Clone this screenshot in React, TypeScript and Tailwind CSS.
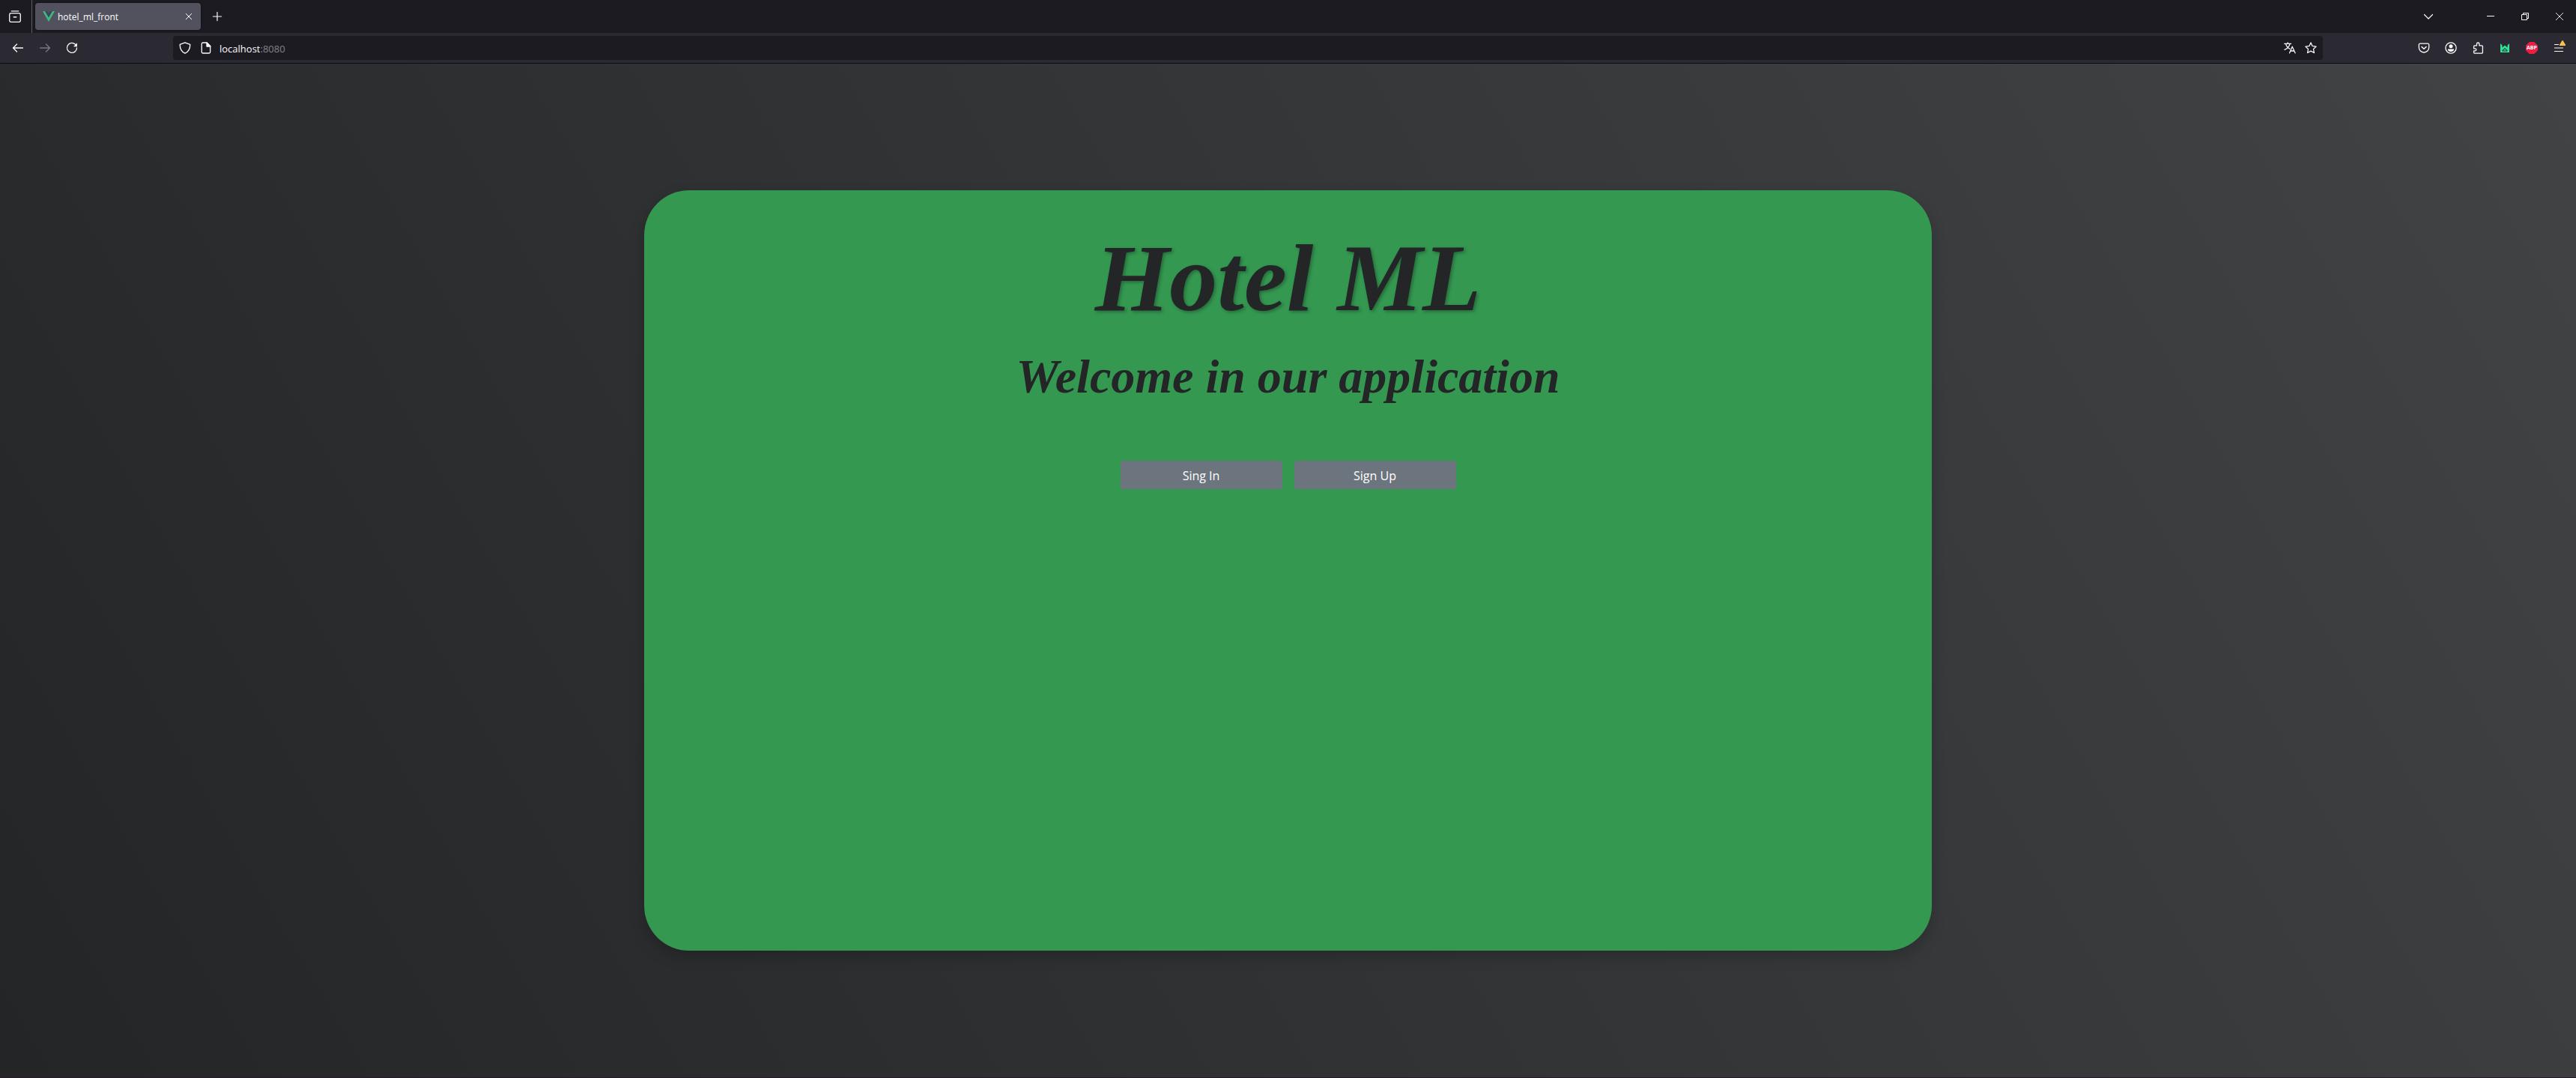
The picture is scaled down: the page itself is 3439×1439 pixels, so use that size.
import type { ReactNode } from "react";

type IconButtonProps = { label: string; className?: string; children: ReactNode };

function IconButton({ label, className = "w-9 h-8", children }: IconButtonProps) {
  return (
    <button type="button" aria-label={label} className={`flex shrink-0 items-center justify-center rounded text-[#fbfbfe] ${className}`}>
      {children}
    </button>
  );
}

function Icon({ children, className = "size-4" }: { children: ReactNode; className?: string }) {
  return (
    <svg viewBox="0 0 16 16" className={className} fill="none" stroke="currentColor" strokeWidth="1.3" strokeLinecap="round" strokeLinejoin="round" aria-hidden="true">
      {children}
    </svg>
  );
}

function TabStrip() {
  return (
    <div className="flex h-11 items-center bg-[#1c1b22]">
      <div className="flex h-full w-[43px] items-center border-r border-[#5b5b66] pl-0.5">
        <IconButton label="Firefox View">
          <Icon>
            <path d="M3.2 .8h9.6" />
            <path d="M2.5 3.7h11a1.8 1.8 0 0 1 1.8 1.8v8a1.8 1.8 0 0 1-1.8 1.8h-11a1.8 1.8 0 0 1-1.8-1.8v-8a1.8 1.8 0 0 1 1.8-1.8z" />
            <path d="M6.3 8.7h3.4" strokeWidth="1.5" />
          </Icon>
        </IconButton>
      </div>
      <div className="ml-1 flex h-9 w-[221px] items-center rounded bg-[#52525e] pl-2.5 pr-1 shadow-[0_0_3px_rgba(0,0,0,0.5)]">
        <svg viewBox="0 0 16 14" className="h-3.5 w-4" aria-hidden="true">
          <path d="M0 0h3.2L8 8.3 12.8 0H16L8 14z" fill="#41b883" />
          <path d="M3.2 0h2.9L8 3.4 9.9 0h2.9L8 8.3z" fill="#35495e" />
        </svg>
        <span className="ml-1 flex-1 pt-px text-xs text-[#fbfbfe]">hotel_ml_front</span>
        <IconButton label="Close tab" className="size-6">
          <Icon>
            <path d="M4.200 4.200l7.600 7.600M11.800 4.200l-7.600 7.600" strokeWidth="1" />
          </Icon>
        </IconButton>
      </div>
      <IconButton label="New tab" className="ml-1 h-8 w-9">
        <Icon>
          <path d="M8 2.4v11.2M2.4 8h11.2" strokeWidth="1.2" />
        </Icon>
      </IconButton>
      <div className="ml-auto flex h-full items-center">
        <IconButton label="List all tabs" className="mr-[42px] h-8 w-9">
          <Icon>
            <path d="M2.5 5.5L8 11l5.500-5.500" strokeWidth="1.2" />
          </Icon>
        </IconButton>
        <IconButton label="Minimize" className="h-full w-[46px]">
          <svg viewBox="0 0 10 10" className="size-2.5" stroke="currentColor" fill="none" aria-hidden="true">
            <path d="M0 4.500h10" />
          </svg>
        </IconButton>
        <IconButton label="Restore" className="h-full w-[46px]">
          <svg viewBox="0 0 10 10" className="size-2.5" stroke="currentColor" fill="none" aria-hidden="true">
            <path d="M.5 2.500h7v7h-7zM2.500 2.500v-2h7v7h-2" />
          </svg>
        </IconButton>
        <IconButton label="Close window" className="h-full w-[45px]">
          <svg viewBox="0 0 10 10" className="size-2.5" stroke="currentColor" fill="none" aria-hidden="true">
            <path d="M0 0l10 10M10 0L0 10" strokeWidth=".9" />
          </svg>
        </IconButton>
      </div>
    </div>
  );
}

function Toolbar() {
  return (
    <div className="flex h-[41px] items-center border-b border-[#0c0c0d] bg-[#2b2a33] pl-1.5 pr-[5px]">
      <IconButton label="Back">
        <Icon>
          <path d="M14.500 8H1.500M6.500 3L1.500 8l5 5" />
        </Icon>
      </IconButton>
      <button type="button" aria-label="Forward" disabled className="flex h-8 w-9 items-center justify-center text-[#78777f]">
        <Icon>
          <path d="M1.500 8h13M9.500 3l5 5-5 5" />
        </Icon>
      </button>
      <IconButton label="Reload">
        <Icon>
          <path d="M12.600 3.300A6.500 6.500 0 1 0 14.500 8" />
          <path d="M15 1.300v5h-5z" fill="currentColor" stroke="none" />
        </Icon>
      </IconButton>
      <div className="ml-[117px] mr-[117px] flex h-8 flex-1 items-center rounded bg-[#1c1b22] px-0.5">
        <IconButton label="Tracking protection" className="h-7 w-7">
          <Icon>
            <path d="M8 .8l6.800 2.600c0 5.400-2 9.600-6.800 11.800C3.200 13 1.200 8.800 1.200 3.400z" />
          </Icon>
        </IconButton>
        <IconButton label="Site information" className="h-7 w-7">
          <Icon>
            <path d="M3.800 1h5.400l4.500 4.500v7.700a1.800 1.800 0 0 1-1.800 1.800H3.800A1.500 1.500 0 0 1 2.300 13.500v-11A1.500 1.500 0 0 1 3.800 1z" />
            <path d="M9 1v5h5z" fill="currentColor" />
          </Icon>
        </IconButton>
        <div className="ml-1 flex flex-1 items-center pt-0.5 text-[13px]/5">
          <input type="text" aria-label="Address" defaultValue="localhost" className="field-sizing-content bg-transparent p-0 text-[#fbfbfe] outline-none" />
          <span className="text-[#84838c]">:8080</span>
        </div>
        <IconButton label="Translate page" className="h-7 w-7">
          <Icon>
            <path d="M.8 2.400h8.800M5.200 .8v1.600M2.600 2.600c.8 3 2.700 5.400 5.200 6.600M8 2.600C7.200 6 4.600 9 1 10.400" />
            <path d="M7.600 14.800l3.600-8.600 3.900 8.600M8.700 12h5.200" />
          </Icon>
        </IconButton>
        <IconButton label="Bookmark page" className="h-7 w-7">
          <Icon>
            <path d="M8 .9l2.100 4.500 5 .7-3.600 3.400.9 5L8 12.100l-4.400 2.400.9-5L.9 6.100l5-.7z" />
          </Icon>
        </IconButton>
      </div>
      <IconButton label="Save to Pocket">
        <Icon>
          <path d="M2.800 2.200h10.400a1.500 1.500 0 0 1 1.500 1.500v3.600a6.700 6.700 0 0 1-13.400 0V3.700a1.500 1.500 0 0 1 1.500-1.500z" />
          <path d="M5 6.500l3 2.800 3-2.800" strokeWidth="1.500" />
        </Icon>
      </IconButton>
      <IconButton label="Account">
        <Icon>
          <circle cx="8" cy="8" r="7.100" />
          <circle cx="8" cy="5.800" r="2.500" fill="currentColor" stroke="none" />
          <path d="M3.800 9.500h8.400c0 2-1.800 3.500-4.200 3.500s-4.200-1.500-4.200-3.500z" fill="currentColor" stroke="none" />
        </Icon>
      </IconButton>
      <IconButton label="Extensions">
        <Icon>
          <path d="M6.500 4.800V2.700a1.700 1.700 0 0 1 3.400 0v2.100h3.300a1.200 1.200 0 0 1 1.200 1.200v8a1.200 1.200 0 0 1-1.200 1.200H3.800A1.200 1.200 0 0 1 2.600 14v-2.200h1.800a1.500 1.500 0 0 0 0-3H2.600V6a1.200 1.200 0 0 1 1.200-1.200z" />
        </Icon>
      </IconButton>
      <IconButton label="Web extension">
        <svg viewBox="0 0 16 16" className="size-4" fill="#34e096" aria-hidden="true">
          <path fillRule="evenodd" d="M2 2l2.500 2.500v3L8 4.500l3.500 3v-3L14 2v12H2zM4.500 12.500h7v-1.200L8 8l-3.500 3.300z" />
          <path d="M8 9.200l2.500 2.300H5.500z" />
        </svg>
      </IconButton>
      <IconButton label="Adblock Plus">
        <span className="flex size-4 items-center justify-center bg-[#ed1e45] text-[7px] font-bold text-white [clip-path:polygon(30%_0,70%_0,100%_30%,100%_70%,70%_100%,30%_100%,0_70%,0_30%)]">
          ABP
        </span>
      </IconButton>
      <IconButton label="Open application menu" className="relative h-8 w-9">
        <Icon>
          <path d="M2.500 3.500h5M2.500 8h11M2.500 12.500h11" strokeWidth="1.200" />
        </Icon>
        <svg viewBox="0 0 8 7" className="absolute right-[9px] top-1.5 h-[7px] w-2" fill="#ffbd4f" aria-hidden="true">
          <path d="M3.500 0h1L8 5.800V7H0V5.800z" />
        </svg>
      </IconButton>
    </div>
  );
}

function ActionButton({ children }: { children: ReactNode }) {
  return (
    <button type="button" className="w-[216px] rounded bg-[#6c757d] pb-1.5 pt-2 text-base text-white">
      {children}
    </button>
  );
}

export default function App() {
  return (
    <div className="flex min-h-screen flex-col border-b border-[#231c28] font-['Open_Sans',sans-serif]">
      <header>
        <TabStrip />
        <Toolbar />
      </header>
      <main className="flex flex-1 justify-center bg-[linear-gradient(60deg,#232526,#414345)] py-[169px]">
        <section className="flex w-1/2 flex-col items-center rounded-[60px] bg-[#349851] pt-10 text-[#232526] shadow-[0_8px_20px_rgba(0,0,0,0.2)]">
          <h1 className="font-['Liberation_Serif',serif] text-9xl/[154px] font-bold italic [text-shadow:2px_2px_4px_rgba(0,0,0,0.3)]">Hotel ML</h1>
          <h2 className="mt-4 font-['Liberation_Serif',serif] text-[64px]/[77px] font-bold italic">Welcome in our application</h2>
          <div className="mt-[74px] flex gap-4">
            <ActionButton>Sing In</ActionButton>
            <ActionButton>Sign Up</ActionButton>
          </div>
        </section>
      </main>
    </div>
  );
}
